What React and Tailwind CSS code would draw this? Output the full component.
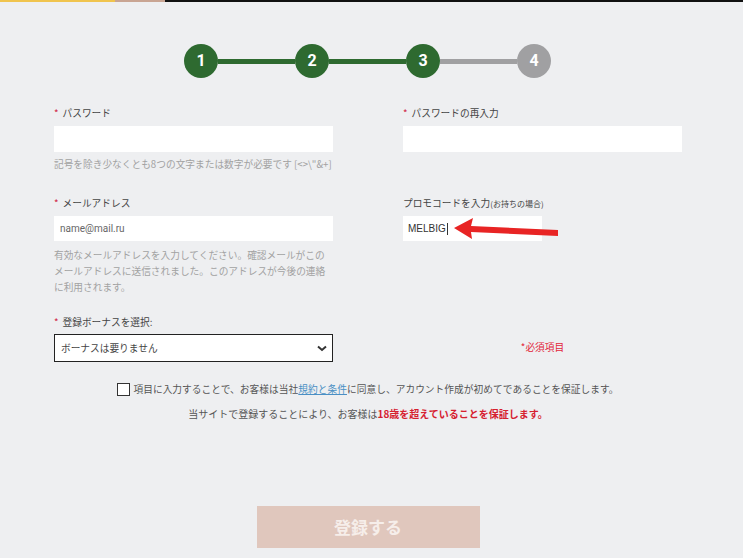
import React from "react";

const jp = { fontFamily: '"Noto Sans CJK JP", "Noto Sans", sans-serif' };

function Steps() {
  const steps = [1, 2, 3, 4];
  return (
    <div className="flex items-center justify-center pt-[42px] pr-[8px]">
      {steps.map((n, i) => (
        <React.Fragment key={n}>
          {i > 0 && <div className={`w-[77px] h-[5px] ${n <= 3 ? 'bg-[#2e6a30]' : 'bg-[#a0a0a2]'}`} />}
          <div className={`w-[34px] h-[34px] rounded-full flex items-center justify-center text-white text-[16px] font-bold ${n <= 3 ? 'bg-[#2e6a30]' : 'bg-[#a0a0a2]'}`} style={{ fontFamily: 'Roboto, sans-serif' }}>{n}</div>
        </React.Fragment>
      ))}
    </div>
  );
}

function Label({ children, required = true }) {
  return (
    <div className="h-[14px] leading-[14px] text-[9.7px] text-[#444]">
      {required && <span className="text-[#d0264a] mr-[4px]">*</span>}
      {children}
    </div>
  );
}

export default function App() {
  return (
    <div className="relative min-h-[558px] bg-[#eeeff1] overflow-hidden" style={jp}>
      <div className="flex h-[2px]">
        <div className="w-[115px] bg-[#f0c44e]" />
        <div className="w-[50px] bg-[#c9a593]" />
        <div className="flex-1 bg-[#111]" />
      </div>
      <Steps />

      <div className="w-[628px] ml-[54px]">
        <div className="grid grid-cols-[279px_279px] gap-x-[70px] mt-[28px]">
          <div>
            <Label>パスワード</Label>
            <div className="mt-[6px] h-[26px] bg-white" />
            <div className="mt-[5px] text-[9.7px] leading-[14px] text-[#a2a2a2] whitespace-nowrap">記号を除き少なくとも8つの文字または数字が必要です [&lt;&gt;\"&amp;+]</div>
          </div>
          <div>
            <Label>パスワードの再入力</Label>
            <div className="mt-[6px] h-[26px] bg-white" />
          </div>

          <div className="mt-[25px]">
            <Label>メールアドレス</Label>
            <div className="mt-[6px] h-[25px] bg-white flex items-center px-[6px] text-[10px] text-[#666]" style={{ fontFamily: 'Roboto, sans-serif' }}>name@mail.ru</div>
            <div className="mt-[6px] text-[9.7px] leading-[16px] text-[#a2a2a2]">有効なメールアドレスを入力してください。確認メールがこのメールアドレスに送信されました。このアドレスが今後の連絡に利用されます。</div>
          </div>
          <div className="mt-[25px]">
            <div className="h-[14px] leading-[14px] text-[9.7px] text-[#444]">プロモコードを入力<span className="text-[8px]">(お持ちの場合)</span></div>
            <div className="mt-[6px] h-[25px] w-[139px] bg-white flex items-center px-[5px] text-[10px] text-[#333]" style={{ fontFamily: '"Liberation Sans", Arial, sans-serif' }}>
              MELBIG<span className="inline-block w-px h-[12px] bg-[#333] ml-px" />
            </div>
          </div>

          <div className="mt-[20px]">
            <Label>登録ボーナスを選択:</Label>
            <div className="mt-[5px] h-[28px] bg-white border border-[#222] flex items-center justify-between pl-[6px] pr-[5px] text-[9.7px] text-[#444]">
              <span>ボーナスは要りません</span>
              <svg width="10" height="7" viewBox="0 0 10 7"><polyline points="1,1.5 5,5 9,1.5" fill="none" stroke="#333" strokeWidth="2" /></svg>
            </div>
          </div>
          <div className="mt-[20px] flex items-end justify-center pb-[7px]">
            <span className="text-[9.7px] text-[#e2263a]">*必須項目</span>
          </div>
        </div>

        <div className="mt-[20px] flex items-center justify-center text-[9.7px] text-[#555] whitespace-nowrap">
          <div className="w-[13px] h-[13px] bg-white border border-[#333] mr-[3px] shrink-0" />
          <span className="tracking-[0.05px]">項目に入力することで、お客様は当社<span className="text-[#4a8fc4] underline">規約と条件</span>に同意し、アカウント作成が初めてであることを保証します。</span>
        </div>
        <div className="mt-[9px] text-center text-[10px] text-[#555]">
          当サイトで登録することにより、お客様は<span className="text-[#d6202f] font-bold">18歳を超えていることを保証します。</span>
        </div>

        <div className="mt-[85px] flex justify-center">
          <button className="w-[223px] h-[42px] bg-[#e0c7bd] text-[#f6eeea] text-[17px] font-bold">登録する</button>
        </div>
      </div>

      <svg className="absolute left-[452px] top-[216px]" width="110" height="26" viewBox="0 0 110 26">
        <polygon points="2,12 21,2 19,10 106,14 106,20 19,16 20,23" fill="#e82424" />
      </svg>
    </div>
  );
}
